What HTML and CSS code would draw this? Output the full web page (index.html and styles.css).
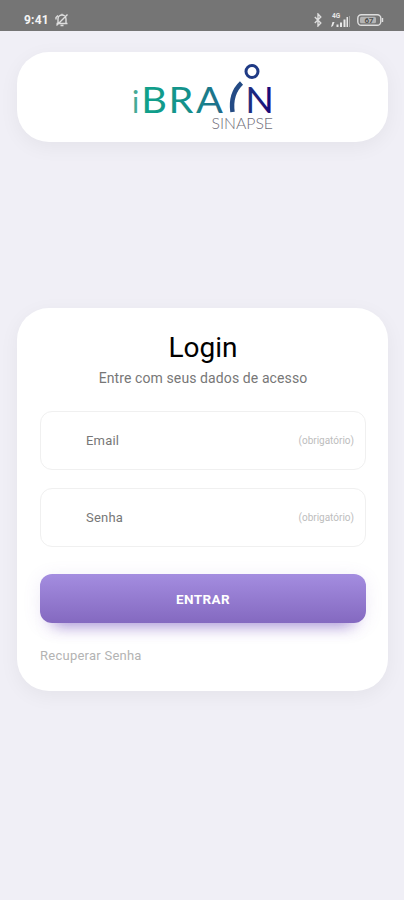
FILE: index.html
```html
<!DOCTYPE html>
<html lang="pt-BR">
<head>
  <meta charset="UTF-8">
  <meta name="viewport" content="width=device-width, initial-scale=1.0">
  <title>iBrain Sinapse - Login</title>
  <link rel="stylesheet" href="styles.css">
</head>
<body>
  <div class="status-bar">
    <span class="time">9:41</span>
    <svg class="bell" viewBox="0 0 14 14" width="14" height="14">
      <path d="M3 10.500V6a4 4 0 0 1 8 0v4.500M1.500 10.500h11M5.500 12.500h3M7 .8v1.400M1.500 12.500L12.500 1.500M1 6.500V4.500L3 2.500"/>
    </svg>
    <div class="status-icons">
      <svg class="bluetooth" viewBox="0 0 10 14" width="10" height="14">
        <path d="M1.800 4l6 6L5 13V1l2.800 3-6 6"/>
      </svg>
      <svg class="signal" viewBox="0 0 22 15" width="22" height="15">
        <text x="2" y="5">4G</text>
        <path d="M1 14l1.500-5h2L3 13M6.500 11.500h2V14h-2zM10 9.500h2V14h-2zM13.500 6.500h2V14h-2z"/>
        <path d="M16.500 4H18v10h-1.500z"/>
        <path class="faint" d="M19 3h1v11h-1z"/>
      </svg>
      <svg class="battery" viewBox="0 0 27 12" width="27" height="12">
        <rect x=".8" y=".8" width="23" height="10.400" rx="3.500"/>
        <rect class="level" x="3" y="2.800" width="16" height="6.400" rx="1.500"/>
        <path d="M25.500 4v4"/>
        <text x="12" y="9" text-anchor="middle">67</text>
      </svg>
    </div>
  </div>

  <div class="card logo-card">
    <svg class="logo" viewBox="132 62 144 70" width="144" height="70">
      <defs>
        <linearGradient id="brand" gradientUnits="userSpaceOnUse" x1="140" y1="0" x2="272" y2="0">
          <stop offset="0" stop-color="#10a08b"/>
          <stop offset=".3" stop-color="#148f8b"/>
          <stop offset=".65" stop-color="#25568a"/>
          <stop offset="1" stop-color="#170878"/>
        </linearGradient>
      </defs>
      <text class="logo-i" x="132" y="113">i</text>
      <text class="logo-name" y="113" x="133.200 158.900 184.900" transform="scale(1.060 1)">BRA</text>
      <text class="logo-name" y="113" x="245.200">N</text>
      <path class="logo-curve" d="M232.500 112C231 101 234 90 241.500 83"/>
      <circle class="logo-head" cx="252" cy="71.500" r="6"/>
      <text class="logo-sub" x="211.500" y="128.500" textLength="61.500" lengthAdjust="spacingAndGlyphs">SINAPSE</text>
    </svg>
  </div>

  <div class="card login-card">
    <h1>Login</h1>
    <p class="subtitle">Entre com seus dados de acesso</p>
    <form id="loginForm">
      <label class="field">
        <input type="email" placeholder="Email" required>
        <em>(obrigatório)</em>
      </label>
      <label class="field">
        <input type="password" placeholder="Senha" required>
        <em>(obrigatório)</em>
      </label>
      <button type="submit">ENTRAR</button>
    </form>
    <a class="recover" href="#">Recuperar Senha</a>
  </div>
</body>
</html>
```

FILE: styles.css
```css
* {
  box-sizing: border-box;
}
body {
  font-family: Roboto, sans-serif;
  background: #f0eff6;
  color: #000;
  margin: 0;
  min-height: 900px;
}
.status-bar {
  display: flex;
  align-items: center;
  height: 31px;
  padding: 9px 20px 0 24px;
  background: #757575;
  color: #f4f4f4;
}
.time {
  font-size: 12px;
  font-weight: 700;
  letter-spacing: 0.2px;
  width: 31px;
}
.status-bar svg {
  fill: none;
  stroke: #dedede;
  stroke-width: 1.4;
}
.status-icons {
  display: flex;
  align-items: center;
  margin-left: auto;
}
.status-bar .signal {
  margin: 0 5px 0 7px;
  fill: #e8e8e8;
  stroke: none;
}
.signal text {
  font-size: 6.5px;
  font-weight: 700;
}
.signal .faint {
  fill: #a5a5a5;
}
.battery .level {
  fill: #b4b4b4;
  stroke: none;
}
.battery text {
  font-size: 8px;
  font-weight: 700;
  fill: #505050;
  stroke: none;
}
.card {
  width: 371px;
  margin: 0 16px 0 17px;
  background: #fff;
  border-radius: 32px;
  box-shadow: 0 5px 20px rgba(0, 0, 0, 0.05);
}
.logo-card {
  display: flex;
  justify-content: center;
  height: 90px;
  margin-top: 21px;
  padding: 10px 0 0 3px;
}
.logo text {
  font-family: Lato, sans-serif;
}
.logo .logo-i {
  font-size: 30px;
  fill: #45a995;
}
.logo .logo-name {
  font-size: 37.5px;
  fill: url(#brand);
}
.logo-curve {
  fill: none;
  stroke: #244b85;
  stroke-width: 4.5;
}
.logo-head {
  fill: none;
  stroke: #1f3a85;
  stroke-width: 3;
}
.logo .logo-sub {
  font-size: 15px;
  font-weight: 300;
  fill: #6f6d78;
}
.login-card {
  height: 383px;
  margin-top: 166px;
  padding: 22px 22px 0 23px;
}
h1 {
  margin: 0;
  font-size: 28px;
  line-height: 36px;
  font-weight: 400;
  text-align: center;
}
.subtitle {
  margin: 2px 0 23px;
  font-size: 14px;
  line-height: 20px;
  letter-spacing: 0.1px;
  text-align: center;
  color: #777;
}
.field {
  display: flex;
  align-items: center;
  height: 59px;
  margin-bottom: 18px;
  padding: 0 11px 1px 45px;
  border: 1px solid #f0f0f0;
  border-radius: 12px;
}
.field input {
  flex: 1;
  min-width: 0;
  padding: 0;
  border: none;
  outline: none;
  background: none;
  font-family: Roboto, sans-serif;
  font-size: 13px;
  letter-spacing: 0.2px;
}
.field input::placeholder {
  color: #777;
  opacity: 1;
}
.field em {
  font-size: 10px;
  font-style: normal;
  color: #bdbdbd;
}
button {
  display: block;
  width: 100%;
  height: 49px;
  margin-top: 27px;
  border: none;
  border-radius: 12px;
  background: linear-gradient(#a48de0, #8469c0);
  box-shadow: 0 16px 16px -14px rgba(107, 70, 185, 0.6), 0 3px 18px rgba(120, 90, 190, 0.12);
  color: #fff;
  font-family: Roboto, sans-serif;
  font-size: 13.5px;
  font-weight: 700;
  letter-spacing: 0.4px;
  cursor: pointer;
}
.recover {
  display: block;
  margin-top: 24px;
  font-size: 13px;
  line-height: 18px;
  letter-spacing: 0.25px;
  color: #b3b3b3;
  text-decoration: none;
}
```
